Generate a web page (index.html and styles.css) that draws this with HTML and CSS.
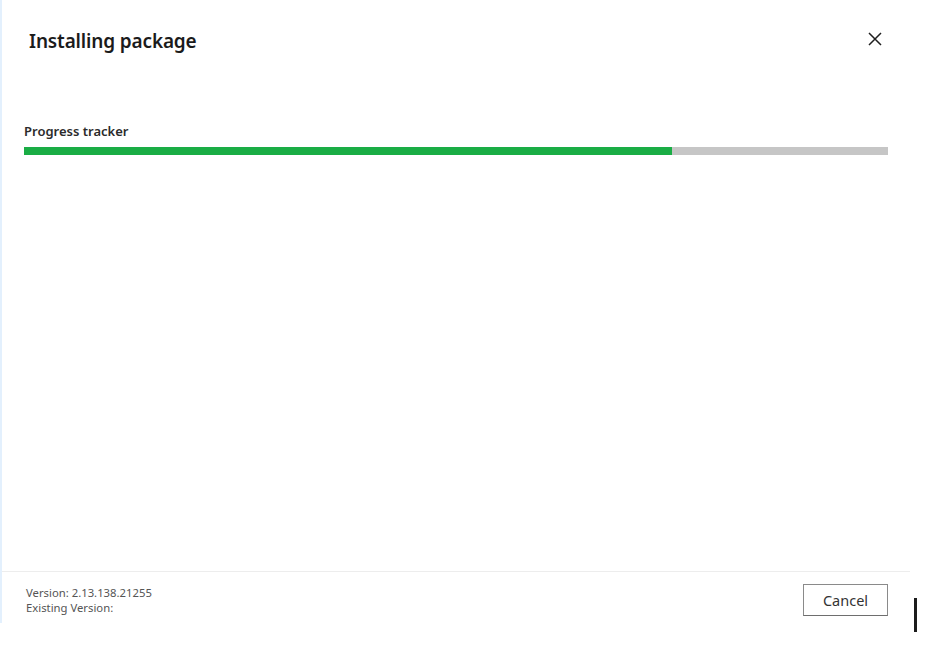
FILE: index.html
```html
<!DOCTYPE html>
<html>
<head>
<meta charset="utf-8">
<link rel="stylesheet" href="styles.css">
</head>
<body>
<div class="dialog">
  <header class="header">
    <h1 class="title">Installing package</h1>
    <button class="close" aria-label="Close">
      <svg width="14" height="14" viewBox="0 0 14 14"><path d="M1 1 L13 13 M13 1 L1 13" stroke="#1f1f1f" stroke-width="1.5" fill="none"/></svg>
    </button>
  </header>
  <main class="content">
    <div class="label">Progress tracker</div>
    <div class="track"><div class="fill" style="width:75%"></div></div>
  </main>
  <footer class="footer">
    <div class="versions">
      <div>Version: 2.13.138.21255</div>
      <div>Existing Version:</div>
    </div>
    <button class="cancel">Cancel</button>
  </footer>
</div>
<div class="cursor"></div>
</body>
</html>
```
FILE: styles.css
```css
html, body {
  margin: 0;
  padding: 0;
  background: #ffffff;
}
body {
  font-family: "Noto Sans", "Open Sans", sans-serif;
  color: #1f1f1f;
  width: 941px;
  height: 645px;
  position: relative;
  overflow: hidden;
}
.dialog {
  width: 908px;
  height: 623px;
  border-left: 2px solid #e3f0fd;
  display: flex;
  flex-direction: column;
  box-sizing: content-box;
}
.header {
  display: flex;
  justify-content: space-between;
  align-items: flex-start;
  padding: 27px 28px 0 27px;
  height: 100px;
  box-sizing: border-box;
}
.title {
  margin: 0;
  font-size: 19px;
  font-weight: 600;
  line-height: 28px;
  letter-spacing: -0.15px;
  color: #1b1b1b;
}
.close {
  border: none;
  background: none;
  padding: 0;
  margin-top: 5px;
  width: 14px;
  height: 14px;
  display: flex;
}
.content {
  flex: 1;
  padding: 22px 20px 0 22px;
}
.label {
  font-size: 13px;
  font-weight: 600;
  line-height: 19px;
  color: #2b2b2b;
  margin-bottom: 6px;
}
.track {
  width: 864px;
  height: 8px;
  background: #c6c6c6;
}
.fill {
  height: 100%;
  background: #1aad45;
}
.footer {
  border-top: 1px solid #ededed;
  height: 51px;
  display: flex;
  justify-content: space-between;
  align-items: flex-start;
  padding: 0 22px 0 24px;
}
.versions {
  padding-top: 13px;
  font-size: 11.3px;
  line-height: 15px;
  color: #555555;
}
.cancel {
  margin-top: 12px;
  width: 85px;
  height: 32px;
  background: #ffffff;
  border: 1px solid #8a8a8a;
  border-bottom-color: #6e6e6e;
  font-family: "Noto Sans", "Open Sans", sans-serif;
  font-size: 14.5px;
  color: #333333;
  padding: 0;
}
.cursor {
  position: absolute;
  left: 914px;
  top: 598px;
  width: 3px;
  height: 34px;
  background: #1c1c1c;
}
```
